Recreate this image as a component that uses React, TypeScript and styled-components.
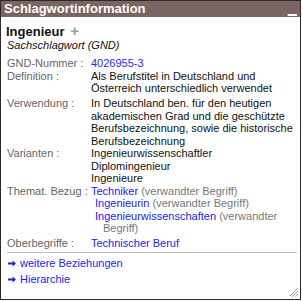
import styled, { createGlobalStyle } from "styled-components";

const GlobalStyle = createGlobalStyle`
  html, body {
    margin: 0;
    padding: 0;
    background: #ffffff;
  }
  body {
    font-family: "Liberation Sans", Arial, sans-serif;
  }
`;

type Related = { term: string; note?: string };

const related: Related[] = [
  { term: "Techniker", note: "(verwandter Begriff)" },
  { term: "Ingenieurin", note: "(verwandter Begriff)" },
  { term: "Ingenieurwissenschaften", note: "(verwandter Begriff)" },
];

const ArrowIcon = () => (
  <svg width="8" height="7" viewBox="0 0 8 7">
    <path d="M0 2.6 H4.6 V0.6 L8 3.5 L4.6 6.4 V4.4 H0 Z" fill="currentColor" />
  </svg>
);

const App = () => {
  return (
    <>
      <GlobalStyle />
      <Window>
        <TitleBar>
          <span>Schlagwortinformation</span>
          <MinimizeButton aria-label="minimieren" />
        </TitleBar>
        <Body>
          <Heading>
            Ingenieur <PlusSign>+</PlusSign>
          </Heading>
          <SubHeading>Sachschlagwort (GND)</SubHeading>
          <InfoGrid>
            <Label>GND-Nummer :</Label>
            <Value>
              <IdLink>4026955-3</IdLink>
            </Value>

            <Label>Definition :</Label>
            <Value>
              Als Berufstitel in Deutschland und Österreich unterschiedlich
              verwendet
            </Value>

            <Label $spaced>Verwendung :</Label>
            <Value $spaced>
              In Deutschland ben. für den heutigen akademischen Grad und die
              geschützte Berufsbezeichnung, sowie die historische
              Berufsbezeichnung
            </Value>

            <Label>Varianten :</Label>
            <Value>
              Ingenieurwissenschaftler
              <br />
              Diplomingenieur
              <br />
              Ingenieure
            </Value>

            <Label>Themat. Bezug :</Label>
            <Value>
              {related.map((r, i) => (
                <RelatedItem key={r.term} $first={i === 0}>
                  <TermLink>{r.term}</TermLink> {r.note}
                </RelatedItem>
              ))}
            </Value>

            <Label $spaced>Oberbegriffe :</Label>
            <Value $spaced>
              <TermLink>Technischer Beruf</TermLink>
            </Value>
          </InfoGrid>
          <Divider />
          <LinkList>
            <NavLink>
              <ArrowIcon />
              weitere Beziehungen
            </NavLink>
            <NavLink>
              <ArrowIcon />
              Hierarchie
            </NavLink>
          </LinkList>
        </Body>
        <Footer>
          <svg width="9" height="9" viewBox="0 0 9 9">
            <path
              d="M8.5 0.5 L0.5 8.5 M8.5 3.5 L3.5 8.5 M8.5 6.5 L6.5 8.5"
              stroke="#555"
              strokeWidth="1"
              strokeDasharray="1 0.6"
            />
          </svg>
        </Footer>
      </Window>
    </>
  );
};

const Window = styled.div`
  box-sizing: border-box;
  width: 301px;
  height: 300px;
  border: 1px solid #2e2a2a;
  display: flex;
  flex-direction: column;
  background: #ffffff;
  overflow: hidden;
`;

const TitleBar = styled.div`
  height: 16px;
  padding: 0 3px;
  background-color: #7b6563;
  color: #ffffff;
  font-size: 13px;
  font-weight: bold;
  line-height: 15px;
  display: flex;
  justify-content: space-between;
  align-items: flex-start;
`;

const MinimizeButton = styled.div`
  width: 9px;
  height: 2px;
  margin-top: 13px;
  background: #ffffff;
  border-left: 1px solid #7fa0e0;
`;

const Body = styled.div`
  flex: 1;
  padding: 6px 3px 0 5px;
  color: #111;
`;

const Heading = styled.div`
  font-size: 13px;
  font-weight: bold;
  line-height: 15px;
`;

const PlusSign = styled.span`
  color: #9a9a9a;
  font-size: 15px;
  margin-left: 2px;
`;

const SubHeading = styled.div`
  font-size: 11px;
  font-style: italic;
  line-height: 12.4px;
  margin: 0 0 6px 1px;
`;

const InfoGrid = styled.div`
  display: grid;
  grid-template-columns: 84px 1fr;
  font-size: 11px;
  line-height: 12.5px;
  padding: 0 2px 0 1px;
`;

const Label = styled.div<{ $spaced?: boolean }>`
  color: #666;
  margin-top: ${(p) => (p.$spaced ? "2.5px" : "0")};
`;

const Value = styled.div<{ $spaced?: boolean }>`
  color: #111;
  margin-top: ${(p) => (p.$spaced ? "2.5px" : "0")};
`;

const IdLink = styled.span`
  color: #2a2aee;
`;

const TermLink = styled.span`
  color: #2222e6;
`;

const RelatedItem = styled.div<{ $first?: boolean }>`
  margin-left: ${(p) => (p.$first ? "0" : "4px")};
  padding-left: 8px;
  text-indent: -8px;
  color: #777;
`;

const Divider = styled.hr`
  border: none;
  border-top: 1px solid #bcbcbc;
  margin: 2px 0 0 1px;
`;

const LinkList = styled.div`
  display: flex;
  flex-direction: column;
  gap: 3.6px;
  padding: 4px 0 0 2px;
  font-size: 11px;
  line-height: 12.4px;
`;

const NavLink = styled.div`
  display: flex;
  align-items: center;
  gap: 4px;
  color: #2222ee;
`;

const Footer = styled.div`
  display: flex;
  justify-content: flex-end;
  padding: 0 2px 2px 0;
`;

export default App;
